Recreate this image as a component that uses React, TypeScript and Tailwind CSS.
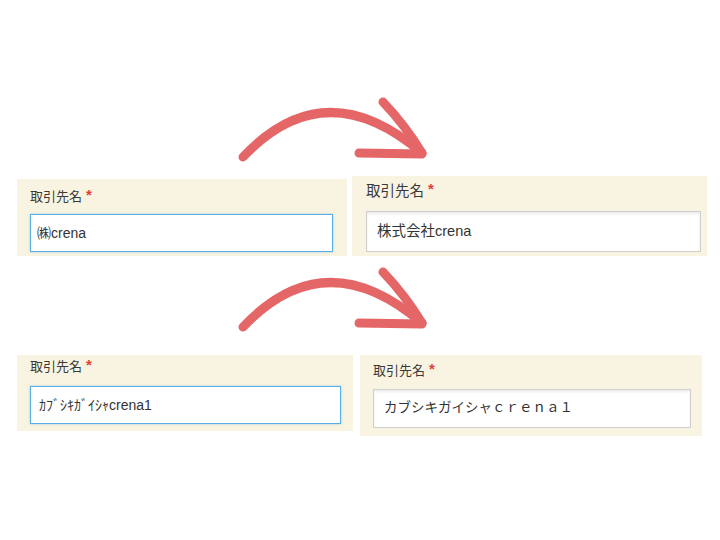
import React from "react";

const font = { fontFamily: '"Liberation Sans", "Noto Sans CJK JP", sans-serif' };

function Arrow({ className }: { className: string }) {
  return (
    <svg className={className} width="200" height="75" viewBox="0 0 200 75" fill="none">
      <g stroke="#e46666" strokeWidth="9" strokeLinecap="round" strokeLinejoin="round">
        <path d="M8 65 Q90 -22 187 61" />
        <path d="M148 10 Q170 33 187 61" />
        <path d="M124 61 L187 62" />
      </g>
    </svg>
  );
}

function Label({ size }: { size: string }) {
  return (
    <div className={`flex items-start leading-[18px] text-[#3a3a3a] ${size}`}>
      <span>取引先名</span>
      <span className="ml-[4px] text-[15px] font-bold text-[#e0403c] leading-[14px]">*</span>
    </div>
  );
}

export default function App() {
  return (
    <div className="w-[720px] h-[540px] bg-white flex flex-col" style={font}>
      <Arrow className="block ml-[235px] mt-[92px]" />
      <div className="flex items-start mt-[9px]">
        <div className="ml-[17px] mt-[3px] w-[330px] h-[77px] bg-[#f9f4e1] pt-[9px] pl-[13px]">
          <Label size="text-[13px]" />
          <div className="mt-[8px] w-[303px] h-[38px] bg-white border border-[#5aaee6] shadow-[0_0_2px_rgba(90,174,230,0.6)] flex items-center pl-[6px] text-[14px] text-[#333]">
            ㈱crena
          </div>
        </div>
        <div className="ml-[5px] w-[355px] h-[80px] bg-[#f9f4e1] pt-[6px] pl-[14px]">
          <Label size="text-[14.5px]" />
          <div className="mt-[11px] w-[335px] h-[41px] bg-white border border-[#cfcfcf] shadow-[inset_0_2px_3px_rgba(0,0,0,0.08)] flex items-center pl-[10px] text-[14.5px] text-[#333]">
            株式会社crena
          </div>
        </div>
      </div>
      <Arrow className="block ml-[235px] mt-[6px]" />
      <div className="flex items-start mt-[18px]">
        <div className="ml-[17px] w-[336px] h-[76px] bg-[#f9f4e1] pt-[3px] pl-[13px]">
          <Label size="text-[13px]" />
          <div className="mt-[10px] w-[311px] h-[38px] bg-white border border-[#5aaee6] shadow-[0_0_2px_rgba(90,174,230,0.6)] flex items-center pl-[8px] text-[14px] text-[#333]">
            ｶﾌﾞｼｷｶﾞｲｼｬcrena1
          </div>
        </div>
        <div className="ml-[7px] w-[342px] h-[81px] bg-[#f9f4e1] pt-[7px] pl-[13px]">
          <Label size="text-[13px]" />
          <div className="mt-[9px] w-[318px] h-[39px] bg-white border border-[#cfcfcf] shadow-[inset_0_2px_3px_rgba(0,0,0,0.08)] flex items-center pl-[10px] text-[13.5px] text-[#333]">
            カブシキガイシャｃｒｅｎａ１
          </div>
        </div>
      </div>
    </div>
  );
}
